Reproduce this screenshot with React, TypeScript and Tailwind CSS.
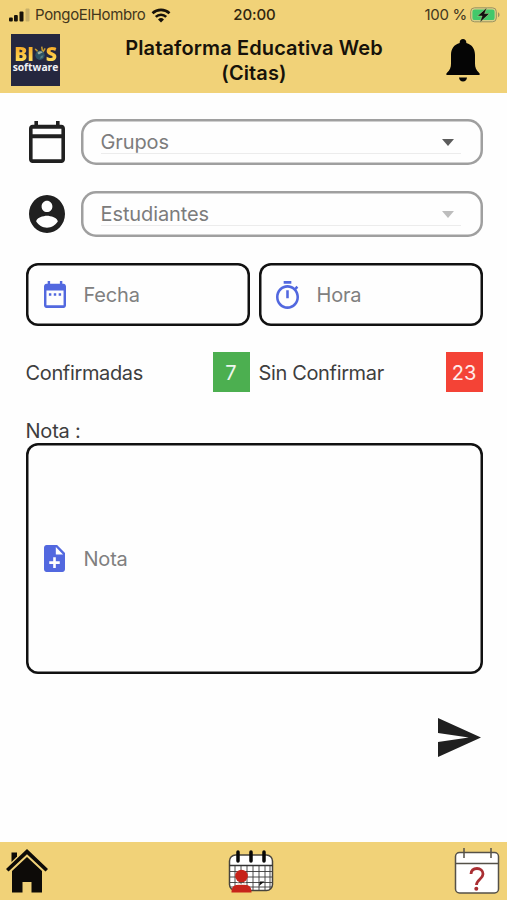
import type { ReactNode } from "react";

type GlyphProps = { viewBox: string; className: string; d: string };

function Glyph({ viewBox, className, d }: GlyphProps) {
	return (
		<svg viewBox={viewBox} preserveAspectRatio="none" fill="currentColor" className={`shrink-0 ${className}`}>
			<path d={d} />
		</svg>
	);
}

function StatusBar() {
	return (
		<div className="grid h-[30px] grid-cols-[1fr_auto_1fr] items-center pl-[9px] pr-[7px] text-[15px] leading-[30px] text-[#42361c]">
			<div className="flex items-center">
				<svg viewBox="0 0 21 14" className="h-[14px] w-[21px]" fill="#17120a">
					<rect y="9.5" width="3.8" height="4" rx="1" />
					<rect x="5" y="7" width="3.8" height="6.5" rx="1" />
					<rect x="10.5" y="3.5" width="4" height="10" rx="1" />
					<rect x="16.5" y="0.5" width="4" height="13" rx="1" fill="#c8af68" />
				</svg>
				<span className="ml-[5px] w-[112px] whitespace-nowrap tracking-[-0.35px]">PongoElHombro</span>
				<svg viewBox="0 0 20 15" className="ml-[4px] h-[15px] w-[20px]" fill="none" stroke="#17120a" strokeWidth="2.6">
					<path d="M1.5 5.3a12.3 12.3 0 0 1 17 0" />
					<path d="M4.8 8.9a7.4 7.4 0 0 1 10.4 0" />
					<path d="M7 11.5a4.4 4.4 0 0 1 6 0L10 14.6Z" fill="#17120a" stroke="none" />
				</svg>
			</div>
			<span className="font-medium tracking-[-0.1px] text-[#30260f]">20:00</span>
			<div className="flex items-center justify-end">
				<span className="whitespace-nowrap tracking-[-0.3px]">100 %</span>
				<svg viewBox="0 0 30 16" className="ml-[3px] h-[16px] w-[30px]">
					<rect x="0.7" y="0.8" width="25.6" height="14" rx="3.8" fill="#d9d18a" stroke="#9b9260" />
					<rect x="2.4" y="2.5" width="22.2" height="10.6" rx="2.2" fill="#42c86b" />
					<path d="M28 5.3c2 .7 2 4.3 0 5z" fill="#9b9260" />
					<path d="M17 .5 7.5 9h4.6L9.800 15.500l9.700-8.900h-4.900z" fill="#111" stroke="#d9e39a" strokeWidth="0.4" />
				</svg>
			</div>
		</div>
	);
}

function Logo() {
	return (
		<div className="flex h-[52px] w-[49px] shrink-0 flex-col items-center bg-[#25273f] pt-[11px] font-['Open_Sans',sans-serif]">
			<div className="flex h-[17px] items-center text-[19.5px] font-extrabold leading-[17px] tracking-[-0.3px]">
				<span className="bg-linear-to-b from-[#f5a51f] to-[#ffe05a] bg-clip-text text-transparent">BI</span>
				<svg viewBox="0 0 14 18" className="h-[17px] w-[12px]">
					<path d="M1 4c2 0 3 2 4 4M9 1l1 6M13 3l-3 5" stroke="#c39a31" strokeWidth="1.8" fill="none" />
					<circle cx="7" cy="11" r="5.5" fill="#2c5264" />
					<path d="M4 8c2-2 5-2 6 0-2 0-3 2-5 2z" fill="#9baf9e" />
					<path d="M8 12l3-1-1 3-3 1z" fill="#557d83" />
				</svg>
				<span className="bg-linear-to-b from-[#f5a51f] to-[#ffe05a] bg-clip-text text-transparent">S</span>
			</div>
			<span className="text-[10.3px] font-bold leading-[10px] text-[#f2f2f5]">software</span>
		</div>
	);
}

function Header() {
	return (
		<header className="h-[93px] bg-[#f1d278]">
			<StatusBar />
			<div className="flex items-start justify-between pl-[11px] pr-[27px] pt-[4px]">
				<Logo />
				<h1 className="ml-[2px] mt-[2px] text-center text-[20px] font-semibold leading-[25px] tracking-[0.12px] text-[#17120a]">
					Plataforma Educativa Web
					<br />
					(Citas)
				</h1>
				<svg viewBox="0 0 34 43" className="mt-[5px] h-[43px] w-[34px]" fill="#050505">
					<path d="M17 0c-2 0-3.300 1.500-3.300 3.300v.8C8 5.600 5 10 5 16v8.500c0 4-1 6.500-4 9.200C0 34.600 0 36 1 36h32c1 0 1-1.400 0-2.300-3-2.700-4-5.200-4-9.200V16c0-6-3-10.400-8.700-11.900v-.8C20.300 1.500 19 0 17 0Z" />
					<path d="M13 38.500h8c-.3 2.500-1.800 4-4 4s-3.700-1.500-4-4Z" />
				</svg>
			</div>
		</header>
	);
}

function SelectField({ label, caret }: { label: string; caret: string }) {
	return (
		<div className="flex h-[46px] w-[402px] items-center rounded-[15px] pl-[20px] pr-[22px] shadow-[inset_0_0_0_2.5px_#9f9f9f]">
			<div className="flex h-[24px] w-full items-center justify-between border-b border-[#ececec] text-[20px] leading-[24px] text-[#7c7c7c]">
				<span className="tracking-[-0.1px]">{label}</span>
				<Glyph viewBox="0 0 12 7" className={`mr-[7px] mt-[2px] h-[7px] w-[12px] ${caret}`} d="M0 0h12L6 7z" />
			</div>
		</div>
	);
}

function InputBox({ icon, label, className }: { icon: ReactNode; label: string; className: string }) {
	return (
		<div
			className={`flex items-center rounded-[12px] pl-[17px] text-[20px] text-[#808080] shadow-[inset_0_0_0_2.5px_#111] ${className}`}
		>
			<div className="flex w-[24px] justify-center text-[#5268df]">{icon}</div>
			<span className="ml-[17px] tracking-[-0.2px]">{label}</span>
		</div>
	);
}

function Counter({ label, value, className }: { label: string; value: number; className: string }) {
	return (
		<div className="flex h-[40px] w-[224px] items-center justify-between text-[20px] text-[#3e3e3e]">
			<span className="mt-px whitespace-nowrap tracking-[-0.35px]">{label}</span>
			<span className={`flex h-[40px] w-[37px] items-center justify-center pt-px text-white/90 ${className}`}>{value}</span>
		</div>
	);
}

function HomeIcon() {
	return (
		<svg viewBox="0 0 42 44" className="mt-px h-[44px] w-[42px]" fill="#0d0b08">
			<path d="M5.500 3.500h5.500v4l-5.500 5.500z" />
			<path d="M21 0 0 20l2.500 2.500L21 5.200l18.500 17.300L42 20z" />
			<path d="M21 8 6 22v21.500h10.500V33h9v10.500H36V22z" />
		</svg>
	);
}

function AgendaIcon() {
	return (
		<svg viewBox="0 0 46 44" className="h-[44px] w-[46px]">
			<rect x="1.500" y="5" width="43" height="35.500" rx="6" fill="#fff" stroke="#47443d" strokeWidth="1.500" />
			<path d="M1.500 15.500h43" stroke="#333" strokeWidth="1.500" />
			<path d="M2 21.500h42M2 27h42M2 32.500h42M2 37h42M7 16v24M13 16v24M19 16v24M25 16v24M31 16v24M37 16v24M42 16v23" stroke="#3b3b3b" strokeWidth="0.900" />
			<path d="M10 2v9M23 2v9M36 2v9" stroke="#080808" strokeWidth="3.500" strokeLinecap="round" />
			<path d="M32 31.500h4.500L31 36z" fill="#111" />
			<circle cx="13.500" cy="26" r="6.300" fill="#c7231a" />
			<path d="M9.500 32l4 2.500 4-2.500v4h-8z" fill="#f3d6cf" />
			<path d="M3.500 42.500c0-4 1-6.500 4.500-7.500h11c3.500 1 4.500 3.500 4.500 7.500z" fill="#c7231a" />
		</svg>
	);
}

function PendingIcon() {
	return (
		<svg viewBox="0 0 46 48" className="h-[48px] w-[46px]" fill="none">
			<rect x="1.500" y="4.500" width="43" height="40.500" rx="4" fill="#fff" stroke="#555148" strokeWidth="1.500" />
			<path d="M1.500 15.500h43M10 0v10M37 0v10" stroke="#555148" strokeWidth="1.500" />
			<path d="M17 26c.3-3.500 2.700-5.500 6-5.500s6 2.200 6 5.500c0 5-6.500 5.500-6.500 11" stroke="#a92e32" strokeWidth="2.800" />
			<circle cx="22.300" cy="40.700" r="2" fill="#a92e32" />
		</svg>
	);
}

export default function App() {
	return (
		<div className="flex h-screen w-full flex-col overflow-hidden bg-[#fefefe] font-['Inter',sans-serif]">
			<Header />

			<main className="flex flex-1 flex-col pl-[25.5px] pr-[24.5px] pt-[26px]">
				<div className="flex items-center justify-between pl-[3px]">
					<Glyph
						viewBox="2 1 20 22"
						className="h-[42px] w-[36px] text-[#202020]"
						d="M20 3h-1V1h-2v2H7V1H5v2H4c-1.100 0-2 .9-2 2v16c0 1.100.9 2 2 2h16c1.100 0 2-.9 2-2V5c0-1.100-.9-2-2-2zm0 18H4V10h16v11zm0-13H4V5h16v3z"
					/>
					<SelectField label="Grupos" caret="text-[#5c5c5c]" />
				</div>

				<div className="mt-[26px] flex items-center justify-between pl-[3px]">
					<Glyph
						viewBox="2 2 20 20"
						className="h-[38px] w-[36px] text-[#202020]"
						d="M12 2C6.480 2 2 6.480 2 12s4.480 10 10 10 10-4.480 10-10S17.520 2 12 2zm0 3c1.660 0 3 1.340 3 3s-1.340 3-3 3-3-1.340-3-3 1.340-3 3-3zm0 14.200c-2.500 0-4.710-1.280-6-3.220.03-1.990 4-3.080 6-3.080 1.990 0 5.970 1.090 6 3.080-1.290 1.940-3.500 3.220-6 3.220z"
					/>
					<SelectField label="Estudiantes" caret="text-[#bdbdbd]" />
				</div>

				<div className="mt-[26px] flex justify-between">
					<InputBox
						label="Fecha"
						className="h-[63px] w-[224px]"
						icon={
							<Glyph
								viewBox="3 2 18 20"
								className="h-[27px] w-[22px]"
								d="M9 11H7v2h2v-2zm4 0h-2v2h2v-2zm4 0h-2v2h2v-2zm2-7h-1V2h-2v2H8V2H6v2H5c-1.110 0-1.990.9-1.990 2L3 20c0 1.100.89 2 2 2h14c1.100 0 2-.9 2-2V6c0-1.100-.9-2-2-2zm0 16H5V9h14v11z"
							/>
						}
					/>
					<InputBox
						label="Hora"
						className="h-[63px] w-[224px]"
						icon={
							<Glyph
								viewBox="3 1 18 21"
								className="h-[28px] w-[23px]"
								d="M15 1H9v2h6V1zm-4 13h2V8h-2v6zm8.030-6.610l1.420-1.420c-.43-.51-.9-.99-1.410-1.410l-1.420 1.420C16.070 4.740 14.120 4 12 4c-4.970 0-9 4.030-9 9s4.020 9 9 9 9-4.030 9-9c0-2.120-.74-4.070-1.970-5.610zM12 20c-3.870 0-7-3.130-7-7s3.130-7 7-7 7 3.130 7 7-3.130 7-7 7z"
							/>
						}
					/>
				</div>

				<div className="mt-[26px] flex justify-between">
					<Counter label="Confirmadas" value={7} className="bg-[#4caf50]" />
					<Counter label="Sin Confirmar" value={23} className="bg-[#f44336]" />
				</div>

				<label className="mt-[26px] h-[25px] text-[20px] leading-[26px] tracking-[-0.2px] text-[#3e3e3e]">Nota :</label>
				<InputBox
					label="Nota"
					className="h-[231px] w-full"
					icon={
						<Glyph
							viewBox="4 2 16 20"
							className="h-[27px] w-[21px]"
							d="M14 2H6c-1.100 0-1.990.9-1.990 2L4 20c0 1.100.89 2 1.990 2H18c1.100 0 2-.9 2-2V8l-6-6zm2 14h-3v3h-2v-3H8v-2h3v-3h2v3h3v2zm-3-7V3.500L18.500 9H13z"
						/>
					}
				/>

				<button type="button" aria-label="Enviar" className="mr-[2px] mt-[44px] self-end">
					<Glyph viewBox="0 0 42 39" className="h-[39px] w-[43px] text-[#202020]" d="M0 0 42 19.500 0 39V24l30-4.500L0 15z" />
				</button>
			</main>

			<footer className="flex h-[58px] items-start justify-between bg-[#f1d278] pl-[6px] pr-[7px] pt-[6px]">
				<HomeIcon />
				<div className="mt-[2px]">
					<AgendaIcon />
				</div>
				<PendingIcon />
			</footer>
		</div>
	);
}
